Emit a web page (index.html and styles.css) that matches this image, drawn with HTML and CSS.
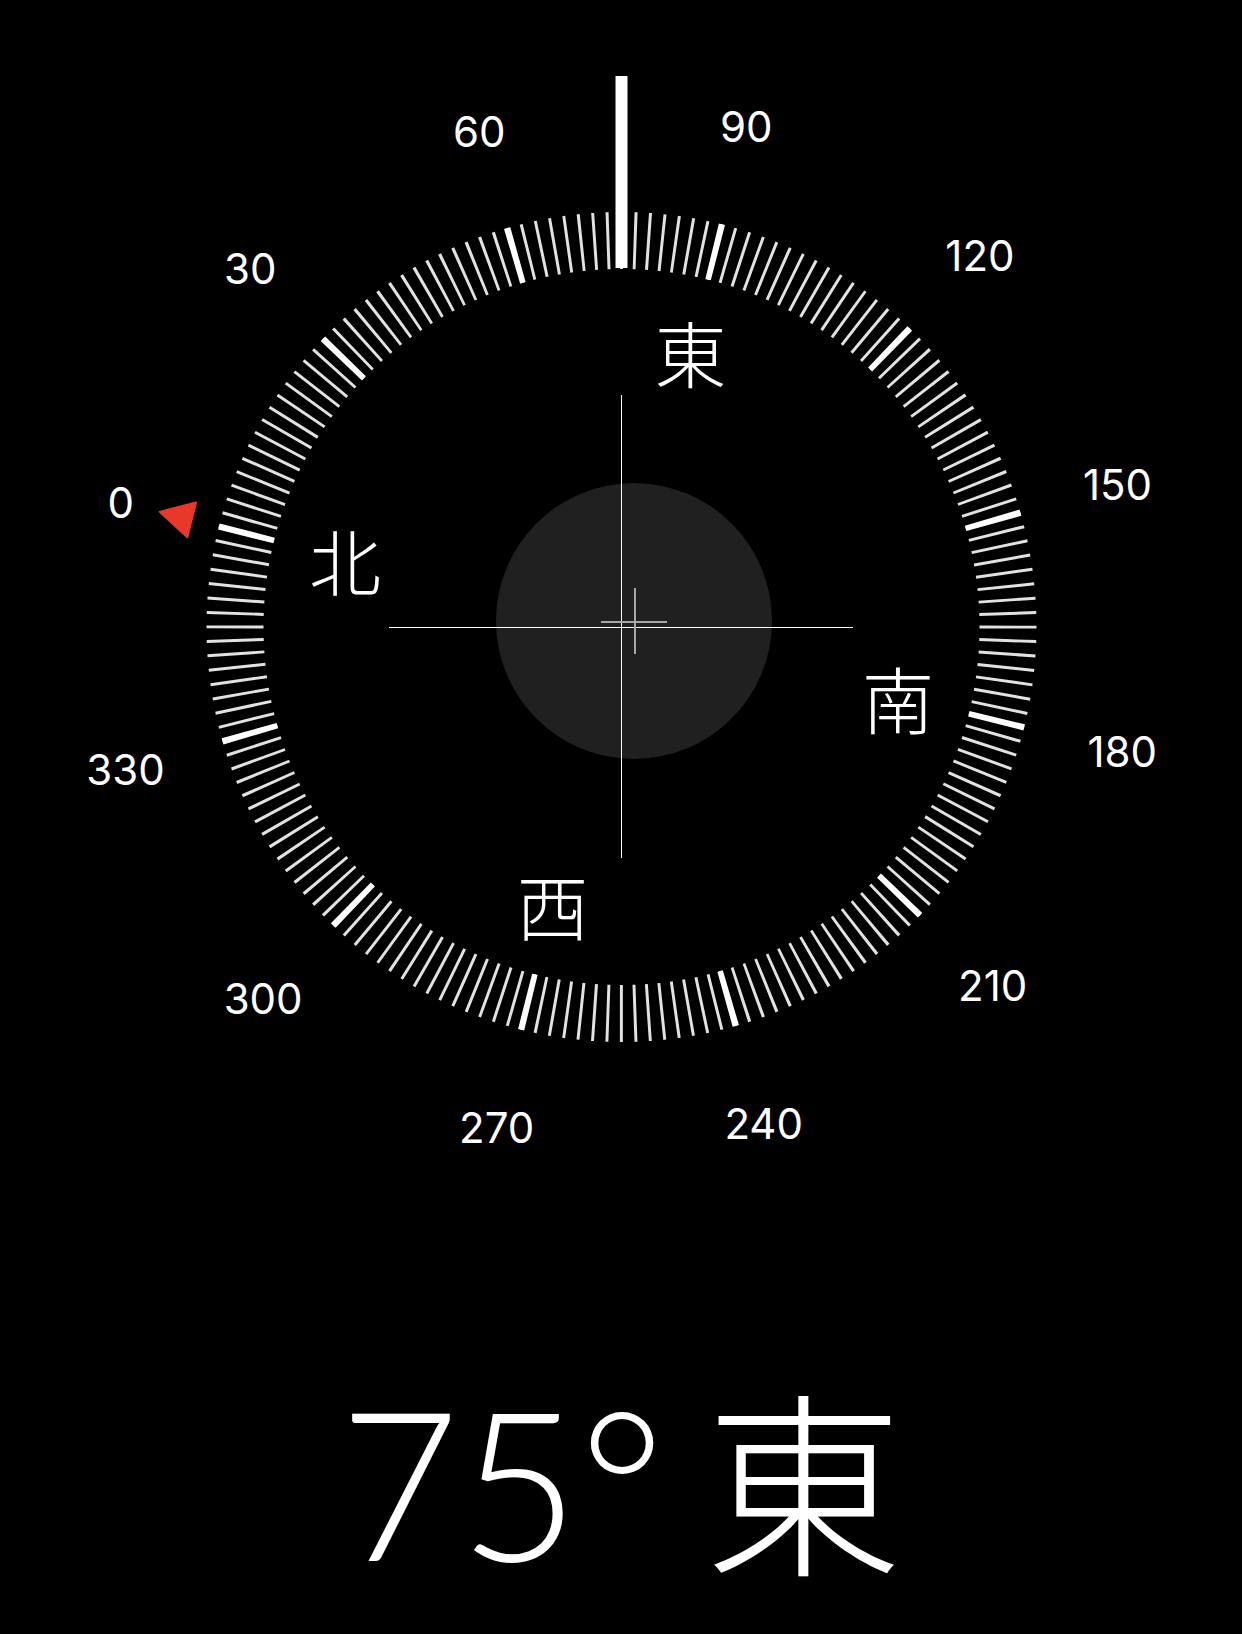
FILE: index.html
```html
<!DOCTYPE html>
<html lang="ja">
<head>
  <meta charset="UTF-8">
  <meta name="viewport" content="width=device-width, initial-scale=1.0">
  <title>コンパス</title>
  <link rel="stylesheet" href="styles.css">
</head>
<body>
  <main class="compass-app">
    <svg class="dial" viewBox="0 0 1242 1190" width="1242" height="1190">
      <g class="rose" transform="rotate(-76 621.5 627)">
        <circle class="ticks" cx="621.5" cy="627" r="386.5" pathLength="360"/>
        <circle class="ticks ticks-major" cx="621.5" cy="627" r="386.5" pathLength="360"/>
        <polygon class="north-marker" points="621.5,151 603.5,184 639.5,184"/>
      </g>

      <g class="degrees">
        <text x="120.8" y="502.2">0</text>
        <text x="250.3" y="268.6">30</text>
        <text x="479.3" y="131.0">60</text>
        <text x="746.3" y="126.3">90</text>
        <text x="979.9" y="255.8">120</text>
        <text x="1117.5" y="484.8">150</text>
        <text x="1122.2" y="751.8">180</text>
        <text x="992.7" y="985.4">210</text>
        <text x="763.7" y="1123.0">240</text>
        <text x="496.7" y="1127.7">270</text>
        <text x="263.1" y="998.2">300</text>
        <text x="125.5" y="769.2">330</text>
      </g>

      <g class="cardinals">
        <text x="345" y="558">北</text>
        <text x="690.4" y="350.5">東</text>
        <text x="898" y="696">南</text>
        <text x="552.6" y="903.5">西</text>
      </g>

      <circle class="level" cx="634" cy="621" r="138"/>
      <line class="crosshair" x1="621.5" y1="395" x2="621.5" y2="858"/>
      <line class="crosshair" x1="389" y1="627.5" x2="853" y2="627.5"/>
      <line class="level-cross" x1="601" y1="622" x2="667" y2="622"/>
      <line class="level-cross" x1="635" y1="588" x2="635" y2="654"/>

      <rect class="needle" x="615.5" y="76" width="12" height="192"/>
    </svg>

    <div class="heading">
      <span class="heading-deg">75°</span>
      <span class="heading-dir">東</span>
    </div>
  </main>
</body>
</html>
```

FILE: styles.css
```css
body {
  margin: 0;
  background: #000;
  color: #fff;
  font-family: Inter, "Noto Sans", sans-serif;
}

.compass-app {
  width: 1242px;
  height: 1634px;
  overflow: hidden;
}

.dial {
  display: block;
}

.ticks {
  fill: none;
  stroke: #e2e2e2;
  stroke-width: 57;
  stroke-dasharray: 0.44 1.56;
  stroke-dashoffset: 0.22;
}

.ticks-major {
  stroke: #fff;
  stroke-dasharray: 0.9 29.1;
  stroke-dashoffset: 0.45;
}

.north-marker {
  fill: #e8382a;
  stroke: #e8382a;
  stroke-width: 2;
  stroke-linejoin: round;
}

.degrees text {
  fill: #fff;
  font-family: Inter, "Liberation Sans", sans-serif;
  font-size: 42px;
  text-anchor: middle;
  dominant-baseline: central;
}

.cardinals text {
  fill: #fff;
  font-family: "Noto Sans CJK JP", sans-serif;
  font-size: 72px;
  font-weight: 300;
  text-anchor: middle;
  dominant-baseline: central;
}

.level {
  fill: #202020;
}

.crosshair {
  stroke: #fff;
  stroke-width: 1;
}

.level-cross {
  stroke: #a8a8a8;
  stroke-width: 2;
}

.needle {
  fill: #fff;
}

.heading {
  display: flex;
  justify-content: center;
  align-items: baseline;
  gap: 40px;
  padding-top: 186px;
  line-height: 1;
}

.heading-deg {
  font-family: Lato, "Noto Sans", sans-serif;
  font-size: 207px;
  font-weight: 300;
}

.heading-dir {
  font-family: "Noto Sans CJK JP", sans-serif;
  font-size: 198px;
  font-weight: 300;
}
```
